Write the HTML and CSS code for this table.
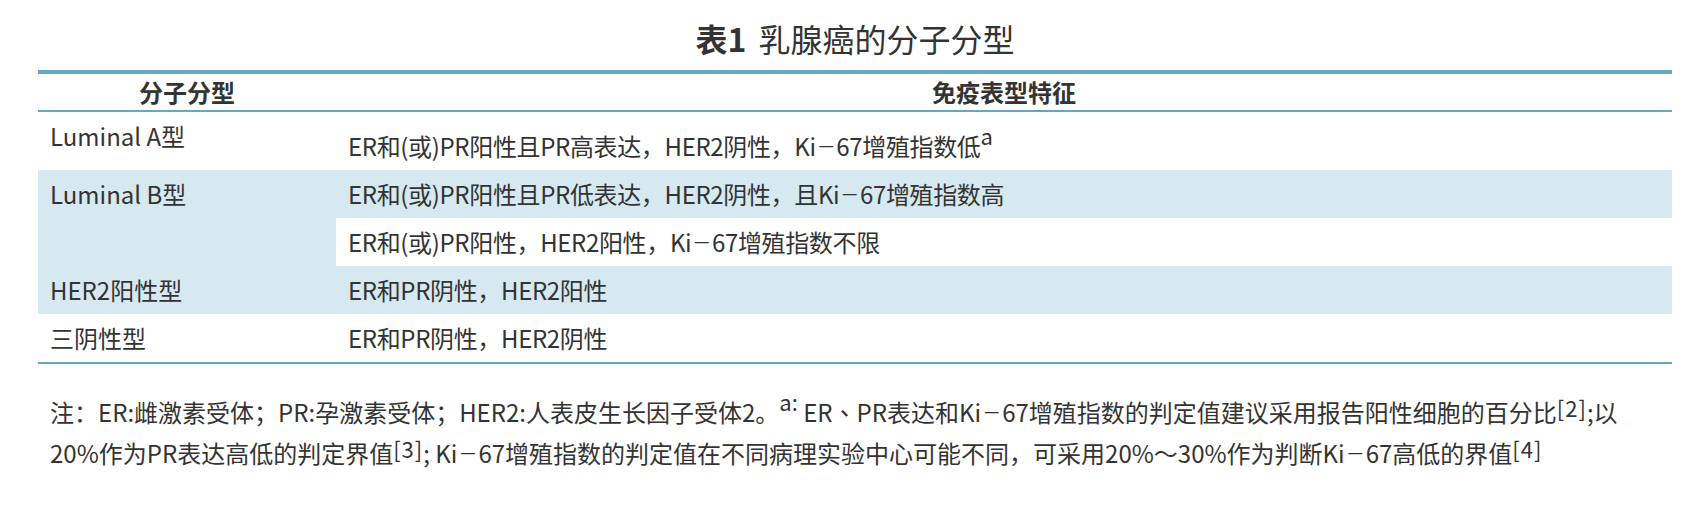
FILE: index.html
```html
<!DOCTYPE html>
<html lang="zh-CN">
<head>
<meta charset="utf-8">
<title>表1 乳腺癌的分子分型</title>
<link rel="stylesheet" href="styles.css">
</head>
<body>
<div class="wrap">
  <h1 class="title"><b>表1</b><span class="title-text">乳腺癌的分子分型</span></h1>
  <table class="grid">
    <thead>
      <tr>
        <th class="c1">分子分型</th>
        <th class="c2">免疫表型特征</th>
      </tr>
    </thead>
    <tbody>
      <tr>
        <td class="c1">Luminal A型</td>
        <td class="c2">ER和(或)PR阳性且PR高表达，HER2阴性，Ki<span class="dash">－</span>67增殖指数低<sup class="mark">a</sup></td>
      </tr>
      <tr class="alt">
        <td class="c1" rowspan="2">Luminal B型</td>
        <td class="c2">ER和(或)PR阳性且PR低表达，HER2阴性，且Ki<span class="dash">－</span>67增殖指数高</td>
      </tr>
      <tr>
        <td class="c2">ER和(或)PR阳性，HER2阳性，Ki<span class="dash">－</span>67增殖指数不限</td>
      </tr>
      <tr class="alt">
        <td class="c1">HER2阳性型</td>
        <td class="c2">ER和PR阴性，HER2阳性</td>
      </tr>
      <tr>
        <td class="c1">三阴性型</td>
        <td class="c2">ER和PR阴性，HER2阴性</td>
      </tr>
    </tbody>
  </table>
  <p class="note">注：ER:雌激素受体；PR:孕激素受体；HER2:人表皮生长因子受体2。<sup class="note-mark">a:</sup> ER、PR表达和Ki<span class="dash">－</span>67增殖指数的判定值建议采用报告阳性细胞的百分比<sup class="ref">[2]</sup>;以20%作为PR表达高低的判定界值<sup class="ref">[3]</sup>; Ki<span class="dash">－</span>67增殖指数的判定值在不同病理实验中心可能不同，可采用20%～30%作为判断Ki<span class="dash">－</span>67高低的界值<sup class="ref">[4]</sup></p>
</div>
</body>
</html>
```
FILE: styles.css
```css
html, body {
  margin: 0;
  padding: 0;
  background: #ffffff;
}

body {
  font-family: "Noto Sans CJK TC", "Noto Sans CJK SC", sans-serif;
  color: #333333;
}

.wrap {
  width: 1634px;
  margin-left: 38px;
}

.title {
  margin: 15px 0 9px;
  font-size: 32px;
  line-height: 46px;
  font-weight: 400;
  text-align: center;
  color: #333333;
}

.title b {
  font-weight: 700;
}

.title-text {
  margin-left: 12px;
}

.grid {
  width: 100%;
  border-collapse: separate;
  border-spacing: 0;
  border-top: 4px solid #62a8c1;
  border-bottom: 2px solid #62a8c1;
  font-size: 24px;
  line-height: 35px;
}

.grid th {
  font-weight: 700;
  text-align: center;
  padding: 0 12px 1px;
  border-bottom: 2px solid #62a8c1;
}

.grid td {
  text-align: left;
  vertical-align: top;
  padding: 6px 12px 7px;
}

.grid td.c2 {
  letter-spacing: -0.35px;
}

.grid .c1 {
  width: 274px;
}

.grid tr.alt td {
  background: #d6e8f0;
}

.dash {
  font-size: 19px;
  vertical-align: 2px;
  line-height: 0;
  margin: 0 1px;
}

.mark {
  font-size: 22px;
  vertical-align: 11px;
}

.note-mark {
  font-size: 22px;
  vertical-align: 11px;
  line-height: 1;
}

.ref {
  font-size: 22px;
  vertical-align: 5px;
  line-height: 1;
  letter-spacing: 1px;
}

.note {
  margin: 26px 0 0;
  padding: 0 12px;
  font-size: 24px;
  line-height: 41px;
}
```
